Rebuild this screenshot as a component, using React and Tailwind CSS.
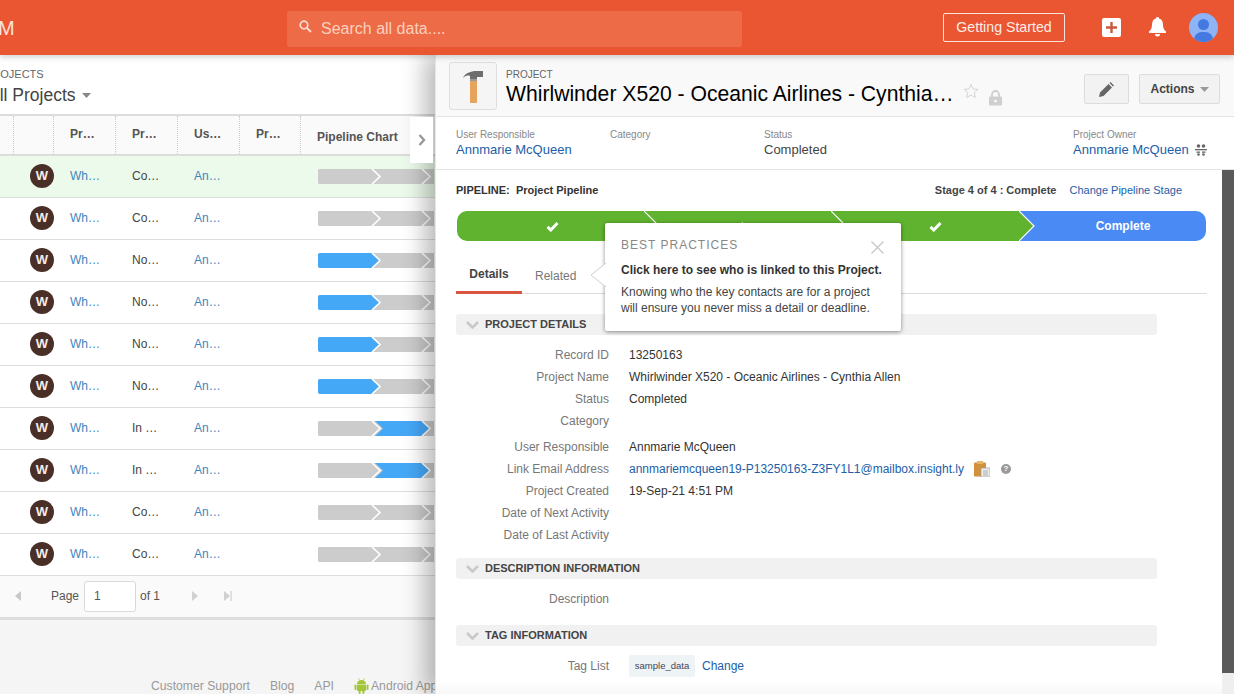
import React from "react";

const Check = () => (
  <svg width="13" height="11" viewBox="0 0 13 11"><path d="M1.5 5.8 L4.8 9 L11.5 2" fill="none" stroke="#fff" strokeWidth="3" /></svg>
);

const Caret = ({ color = "#888" }) => (
  <svg width="9" height="5" viewBox="0 0 9 5"><path d="M0 0H9L4.5 5Z" fill={color} /></svg>
);

const SectionChevron = () => (
  <svg width="13" height="8" viewBox="0 0 13 8"><path d="M1 1 L6.5 6.5 L12 1" fill="none" stroke="#c9c9c9" strokeWidth="2.6" /></svg>
);

const Android = () => (
  <svg width="15" height="16" viewBox="0 0 15 16" className="ml-[20px] shrink-0" fill="#a4c639">
    <path d="M4.500 0.500L5.800 2.500M10.500 0.500L9.200 2.500" stroke="#a4c639" strokeWidth="0.800" />
    <path d="M3 6a4.500 4 0 0 1 9 0Z" />
    <rect x="3" y="6.600" width="9" height="6.400" rx="1" />
    <rect x="0.500" y="6.600" width="2" height="5.500" rx="1" />
    <rect x="12.500" y="6.600" width="2" height="5.500" rx="1" />
    <rect x="4.600" y="12" width="2" height="4" rx="1" />
    <rect x="8.400" y="12" width="2" height="4" rx="1" />
  </svg>
);

function Bar({ mode }) {
  const a = mode === 1 ? "#45a8f7" : "#cccccc";
  const b = mode === 2 ? "#45a8f7" : "#cccccc";
  return (
    <svg width="116" height="15" viewBox="0 0 116 15" className="block">
      <path d="M2 0H116V15H2a2 2 0 0 1-2-2V2a2 2 0 0 1 2-2Z" fill="#cccccc" />
      <path d="M2 0H54L62 7.5L54 15H2a2 2 0 0 1-2-2V2a2 2 0 0 1 2-2Z" fill={a} />
      <path d="M57 0H104L112 7.5L104 15H57L65 7.5Z" fill={b} />
      <path d="M54 0L62 7.5L54 15" fill="none" stroke="#fff" strokeWidth="1.6" />
      <path d="M104 0L112 7.5L104 15" fill="none" stroke="#fff" strokeWidth="1.6" />
    </svg>
  );
}

const rows = [
  ["Co…", 0, true], ["Co…", 0], ["No…", 1], ["No…", 1], ["No…", 1], ["No…", 1], ["In …", 2], ["In …", 2], ["Co…", 0], ["Co…", 0],
];

const cols = "grid grid-cols-[14px_40px_62px_62px_62px_61px_134px]";

function Row({ status, mode, active }) {
  return (
    <div className={`${cols} h-[42px] items-center border-b border-[#dedede] pb-[1px] text-[12px] ${active ? "bg-[#ebfaeb]" : "bg-white"}`}>
      <div />
      <div className="flex justify-end">
        <div className="flex h-6 w-6 items-center justify-center rounded-full bg-[#4a2f28] text-[13px] font-bold text-[#f3ece8]">W</div>
      </div>
      <div className="pl-4 text-[#3f85bd]">Wh…</div>
      <div className="pl-4 text-[#444]">{status}</div>
      <div className="pl-4 text-[#3f85bd]">An…</div>
      <div />
      <div className="pl-[17px]"><Bar mode={mode} /></div>
    </div>
  );
}

function Left() {
  return (
    <div className="w-[435px] shrink-0 overflow-hidden bg-[#f5f5f5]">
      <div className="h-[59px] bg-white pt-[13px] text-[#555]">
        <div className="-ml-[15px] whitespace-nowrap text-[11px] leading-[13px] text-[#666]">PROJECTS</div>
        <div className="-ml-[12px] mt-[2px] flex items-center gap-[6px] whitespace-nowrap text-[17.5px] leading-[24px] text-[#444]">
          All Projects <Caret />
        </div>
      </div>
      <div className={`${cols} h-[42px] items-center border-y-2 border-[#dcdcdc] bg-[#fafafa] text-[12px] font-bold text-[#555]`}>
        <div className="h-full border-r border-dotted border-[#ccc]" />
        <div className="h-full border-r border-dotted border-[#ccc]" />
        <div className="flex h-full items-center border-r border-dotted border-[#ccc] pb-[2px] pl-4">Pr…</div>
        <div className="flex h-full items-center border-r border-dotted border-[#ccc] pb-[2px] pl-4">Pr…</div>
        <div className="flex h-full items-center border-r border-dotted border-[#ccc] pb-[2px] pl-4">Us…</div>
        <div className="flex h-full items-center border-r border-dotted border-[#ccc] pb-[2px] pl-4">Pr…</div>
        <div className="flex h-full items-center whitespace-nowrap pl-4 pt-[3px]">Pipeline Chart</div>
      </div>
      {rows.map((r, i) => <Row key={i} status={r[0]} mode={r[1]} active={r[2]} />)}
      <div className="flex h-[44px] items-center border-b-[3px] border-[#dddddd] bg-[#fafafa] pb-[1px] text-[12px] text-[#555]">
        <svg width="6" height="10" viewBox="0 0 6 10" className="ml-[15px]"><path d="M6 0V10L0 5Z" fill="#c8c8c8" /></svg>
        <span className="ml-[30px]">Page</span>
        <div className="ml-[5px] flex h-[31px] w-[52px] items-center rounded-[3px] border border-[#d9d9d9] bg-white pl-[9px]">1</div>
        <span className="ml-[4px]">of 1</span>
        <svg width="6" height="10" viewBox="0 0 6 10" className="ml-[32px]"><path d="M0 0V10L6 5Z" fill="#d0d0d0" /></svg>
        <svg width="8" height="10" viewBox="0 0 8 10" className="ml-[26px]"><path d="M0 0V10L6 5Z" fill="#d0d0d0" /><rect x="6.5" width="1.2" height="10" fill="#d0d0d0" /></svg>
      </div>
      <div className="mt-[58px] flex items-center whitespace-nowrap pl-[151px] text-[12.2px] leading-[14px] text-[#999]">
        <span>Customer Support</span>
        <span className="ml-[20px]">Blog</span>
        <span className="ml-[20px]">API</span>
        <Android />
        <span className="ml-[2px]">Android App</span>
      </div>
    </div>
  );
}

function TopBar() {
  return (
    <header className="relative z-20 flex h-[55px] shrink-0 items-center bg-[#ea5532] shadow-[0_2px_6px_rgba(0,0,0,0.2)]">
      <div className="w-[287px] shrink-0 overflow-hidden">
        <div className="-ml-[31px] whitespace-nowrap text-[20px] text-[#fbe3da]">CRM</div>
      </div>
      <div className="mt-[3px] flex h-[36px] w-[455px] shrink-0 items-center rounded-[3px] bg-[#ee6b47] pl-[12px] text-[16px] text-[#fbd0bf]">
        <svg width="13" height="13" viewBox="0 0 13 13" className="-mt-[5px]"><circle cx="5" cy="5" r="3.8" fill="none" stroke="#fbd9cc" strokeWidth="1.7" /><path d="M8 8l4 4" stroke="#fbd9cc" strokeWidth="2" /></svg>
        <span className="ml-[9px]">Search all data....</span>
      </div>
      <div className="ml-[201px] flex h-[29px] w-[122px] shrink-0 items-center justify-center rounded-[2px] border border-[#fbe3da] text-[14.2px] text-[#fdeee8]">Getting Started</div>
      <div className="ml-[37px] flex h-[19px] w-[19px] shrink-0 items-center justify-center rounded-[2px] bg-white">
        <svg width="11" height="11" viewBox="0 0 11 11"><path d="M5.5 0v11M0 5.5h11" stroke="#c9583c" strokeWidth="2.4" /></svg>
      </div>
      <svg width="17" height="20" viewBox="0 0 17 20" className="ml-[28px] -mt-[2px] shrink-0">
        <path d="M8.5 0a1.5 1.5 0 0 1 1.5 1.6C13 2.3 14 5 14 8c0 3 1 5 3 6.5V16H0v-1.5C2 13 3 11 3 8c0-3 1-5.700 4-6.400A1.500 1.500 0 0 1 8.500 0Z" fill="#fff" />
        <path d="M6 17h5a2.500 2.500 0 0 1-5 0Z" fill="#fff" />
      </svg>
      <div className="relative ml-[23px] h-[29px] w-[29px] shrink-0 overflow-hidden rounded-full bg-[#8fb4f5]">
        <div className="absolute left-[9px] top-[6px] h-[11px] w-[11px] rounded-full bg-[#4379e0]" />
        <div className="absolute left-[5px] top-[19px] h-[14px] w-[19px] rounded-t-[8px] bg-[#4379e0]" />
      </div>
    </header>
  );
}

const fields = [
  ["Record ID", "13250163", 22], ["Project Name", "Whirlwinder X520 - Oceanic Airlines - Cynthia Allen", 22], ["Status", "Completed", 22], ["Category", "", 26],
];
const fields2 = [["User Responsible", "Annmarie McQueen"]];
const fields3 = [["Project Created", "19-Sep-21 4:51 PM"], ["Date of Next Activity", ""], ["Date of Last Activity", ""]];

function Field({ label, children, h = "h-[22px]" }) {
  return (
    <div className={`flex ${h} items-start pt-[3px] text-[12px] leading-[16px]`}>
      <div className="w-[153px] shrink-0 text-right text-[#777]">{label}</div>
      <div className="ml-[20px] flex items-center whitespace-nowrap text-[#333]">{children}</div>
    </div>
  );
}

function Section({ title }) {
  return (
    <div className="flex h-[21px] w-[701px] items-center rounded-[3px] bg-[#f1f1f1] pl-[10px] text-[11px] font-bold text-[#444]">
      <SectionChevron />
      <span className="ml-[6px]">{title}</span>
    </div>
  );
}

function Segment({ last, children, width }) {
  return (
    <div className={`relative flex h-full items-center justify-center ${width} ${last ? "bg-[#4a8af4] pl-[20px] text-[12px] font-bold text-white" : "bg-[#5fb32e]"}`}>
      {children}
      {!last && (
        <svg width="16" height="30" viewBox="0 0 16 30" className="absolute -right-[15px] top-0 z-10">
          <path d="M0 0L15 15L0 30Z" fill="#5fb32e" />
          <path d="M0 0L15 15L0 30" fill="none" stroke="#fff" strokeWidth="1.2" />
        </svg>
      )}
    </div>
  );
}

function Popover() {
  return (
    <div className="absolute left-[169px] top-[53px] z-20 h-[108px] w-[296px] rounded-[2px] bg-white pl-[16px] pt-[15px] text-[#333] shadow-[0_1px_4px_rgba(0,0,0,0.45)]">
      <svg width="16" height="24" viewBox="0 0 16 24" className="absolute -left-[15px] top-[40px]">
        <path d="M16 0L1 12L16 24" fill="#fff" stroke="#cfcfcf" strokeWidth="1" />
      </svg>
      <svg width="13" height="13" viewBox="0 0 13 13" className="absolute right-[17px] top-[18px]">
        <path d="M0.500 0.500L12.500 12.500M12.500 0.500L0.500 12.500" stroke="#c8c8c8" strokeWidth="1.4" />
      </svg>
      <div className="text-[12px] leading-[14px] tracking-[1px] text-[#888]">BEST PRACTICES</div>
      <div className="mt-[11px] text-[12px] font-bold leading-[14px]">Click here to see who is linked to this Project.</div>
      <div className="mt-[7px] text-[12px] leading-[16px] text-[#444]">Knowing who the key contacts are for a project<br />will ensure you never miss a detail or deadline.</div>
    </div>
  );
}

function Panel() {
  return (
    <div className="relative z-10 flex w-[799px] shrink-0 flex-col overflow-visible border-l border-[#e6e6e6] bg-white shadow-[-10px_0_22px_rgba(0,0,0,0.28)]">
      <div className="absolute -left-[26px] top-[62px] flex h-[46px] w-[23px] items-center justify-center bg-white">
        <svg width="8" height="12" viewBox="0 0 8 12"><path d="M1.500 1L6 6L1.500 11" fill="none" stroke="#999" strokeWidth="2.400" /></svg>
      </div>
      <div className="flex h-[62px] shrink-0 border-b border-[#e3e3e3] bg-[#f9f9f9] pl-[13px] pt-[7px]">
        <div className="flex h-[48px] w-[48px] shrink-0 items-center justify-center rounded-[3px] border border-[#dedede] bg-[#f5f5f5]">
          <svg width="21" height="33" viewBox="0 0 21 33">
            <path d="M0 8C2 3 8 1 13 1H20V7H14V10H7V6C4 5 2 6 0 8Z" fill="#6e6e6e" />
            <rect x="7" y="9" width="7" height="3" fill="#9a9a9a" />
            <rect x="7" y="11" width="7" height="22" rx="1" fill="#e6a35c" />
          </svg>
        </div>
        <div className="ml-[9px] mt-[7px] w-[520px] shrink-0">
          <div className="text-[10px] leading-[12px] text-[#666]">PROJECT</div>
          <div className="whitespace-nowrap text-[21.15px] leading-[26px] text-black">Whirlwinder X520 - Oceanic Airlines - Cynthia…</div>
        </div>
        <svg width="16" height="16" viewBox="0 0 24 24" className="-ml-[63px] mt-[21px] shrink-0"><path d="M12 2l3 7 7.500.600-5.700 4.900 1.800 7.300L12 18l-6.600 3.800 1.800-7.300L1.500 9.600 9 9Z" fill="none" stroke="#d5d5d5" strokeWidth="1.500" /></svg>
        <svg width="13" height="16" viewBox="0 0 13 16" className="ml-[10px] mt-[28px] shrink-0">
          <path d="M3 7V4.500a3.500 3.500 0 0 1 7 0V7" fill="none" stroke="#cfcfcf" strokeWidth="1.800" />
          <rect y="6.500" width="13" height="9" rx="1" fill="#cfcfcf" />
          <circle cx="6.500" cy="11" r="1.300" fill="#fff" />
        </svg>
        <div className="ml-[82px] mt-[12px] flex h-[30px] w-[45px] shrink-0 items-center justify-center rounded-[2px] border border-[#dcdcdc] bg-[#f2f2f2]">
          <svg width="15" height="15" viewBox="0 0 15 15"><path d="M0 15l1-4.500L9.500 2l3.500 3.500L4.500 14Z M10.500 1l1-1 3.500 3.500-1 1Z" fill="#666" /></svg>
        </div>
        <div className="ml-[10px] mt-[12px] flex h-[30px] w-[81px] shrink-0 items-center justify-center gap-[5px] rounded-[2px] border border-[#dcdcdc] bg-[#f2f2f2] text-[12px] font-bold text-[#444]">
          Actions <Caret color="#999" />
        </div>
      </div>
      <div className="relative flex h-[53px] shrink-0 border-b border-[#e3e3e3] pl-[20px] pt-[12px]">
        <div className="w-[154px]">
          <div className="text-[10px] leading-[12px] text-[#888]">User Responsible</div>
          <div className="text-[13px] leading-[18px] text-[#225ea8]">Annmarie McQueen</div>
        </div>
        <div className="w-[154px]">
          <div className="text-[10px] leading-[12px] text-[#888]">Category</div>
        </div>
        <div className="w-[309px]">
          <div className="text-[10px] leading-[12px] text-[#888]">Status</div>
          <div className="text-[13px] leading-[18px] text-[#444]">Completed</div>
        </div>
        <div>
          <div className="text-[10px] leading-[12px] text-[#888]">Project Owner</div>
          <div className="flex items-center gap-[6px] whitespace-nowrap text-[13px] leading-[18px] text-[#225ea8]">
            Annmarie McQueen
            <svg width="12" height="12" viewBox="0 0 12 12" fill="#666"><circle cx="3.500" cy="2" r="1.800" /><circle cx="8.500" cy="2" r="1.800" /><rect y="5" width="12" height="1.300" /><rect x="1.500" y="7.500" width="3.500" height="1.300" /><rect x="7" y="7.500" width="3.500" height="1.300" /><circle cx="3.500" cy="10.500" r="1.300" /><circle cx="8.500" cy="10.500" r="1.300" /></svg>
          </div>
        </div>
      </div>
      <div className="relative flex min-h-0 flex-1">
        <div className="min-w-0 flex-1 overflow-hidden pl-[20px]">
          <div className="flex h-[41px] w-[726px] items-center pb-[1px] text-[11px]">
            <span className="font-bold text-[#333]">PIPELINE:&nbsp; Project Pipeline</span>
            <span className="ml-auto font-bold text-[#444]">Stage 4 of 4 : Complete</span>
            <span className="ml-[13px] text-[#225ea8]">Change Pipeline Stage</span>
          </div>
          <div className="ml-[1px] flex h-[30px] w-[749px] overflow-hidden rounded-[10px]">
            <Segment width="w-[188px]"><div className="pl-[2px]"><Check /></div></Segment>
            <Segment width="w-[187px]"><Check /></Segment>
            <Segment width="w-[188px]"><div className="pl-[18px]"><Check /></div></Segment>
            <Segment width="flex-1" last>Complete</Segment>
          </div>
          <div className="mt-[19px] flex h-[34px] w-[751px] border-b border-[#dcdcdc] text-[12px]">
            <div className="flex h-[34px] w-[66px] items-start justify-center border-b-[3px] border-[#d9553f] pt-[5px] font-bold text-[#444]">Details</div>
            <div className="ml-[13px] pt-[7px] text-[#777]">Related</div>
          </div>
          <div className="mt-[20px]"><Section title="PROJECT DETAILS" /></div>
          <div className="mt-[9px]">
            {fields.map(([l, v, h]) => <Field key={l} label={l} h={h === 26 ? "h-[26px]" : "h-[22px]"}>{v}</Field>)}
            {fields2.map(([l, v]) => <Field key={l} label={l}>{v}</Field>)}
            <Field label="Link Email Address">
              <span className="text-[#225ea8]">annmariemcqueen19-P13250163-Z3FY1L1@mailbox.insight.ly</span>
              <svg width="16" height="16" viewBox="0 0 16 16" className="ml-[10px]">
                <rect x="0" y="1.500" width="12" height="14" rx="1" fill="#d1913a" />
                <rect x="3" y="0" width="6" height="3" fill="#e4b56b" />
                <rect x="7" y="7" width="9" height="9" fill="#eeeeee" stroke="#999" strokeWidth="0.700" />
                <path d="M9 10h5M9 12h5M9 14h5" stroke="#999" strokeWidth="0.800" />
              </svg>
              <div className="ml-[11px] flex h-[10px] w-[10px] items-center justify-center rounded-full bg-[#999] text-[8px] font-bold leading-none text-white">?</div>
            </Field>
            {fields3.map(([l, v]) => <Field key={l} label={l}>{v}</Field>)}
          </div>
          <div className="mt-[12px]"><Section title="DESCRIPTION INFORMATION" /></div>
          <div className="mt-[9px]"><Field label="Description" /></div>
          <div className="mt-[15px]"><Section title="TAG INFORMATION" /></div>
          <div className="mt-[9px] flex h-[22px] items-center text-[12px]">
            <div className="w-[153px] text-right text-[#777]">Tag List</div>
            <div className="ml-[20px] flex h-[22px] w-[66px] items-center justify-center rounded-[2px] bg-[#eef3f6] text-[9.500px] text-[#445]">sample_data</div>
            <span className="ml-[7px] text-[#225ea8]">Change</span>
          </div>
        </div>
        <div className="w-[12px] shrink-0 bg-[#efefef]">
          <div className="h-[503px] bg-[#5a5a5a]" />
        </div>
        <Popover />
        <div className="pointer-events-none absolute bottom-0 left-0 right-[12px] h-[12px] bg-gradient-to-t from-[#f7f7f7] to-transparent" />
      </div>
    </div>
  );
}

export default function App() {
  return (
    <div className="flex h-[694px] w-[1234px] flex-col overflow-hidden bg-white font-['Liberation_Sans',Arial,sans-serif]">
      <TopBar />
      <div className="flex min-h-0 flex-1">
        <Left />
        <Panel />
      </div>
    </div>
  );
}
